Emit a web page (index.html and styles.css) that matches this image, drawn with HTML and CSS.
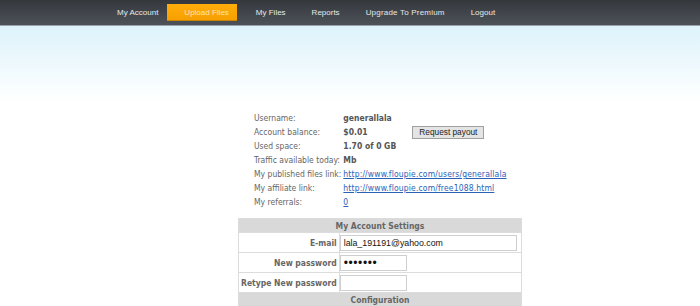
FILE: index.html
```html
<!DOCTYPE html>
<html lang="en">

<head>
    <meta charset="UTF-8">
    <meta name="viewport" content="width=device-width, initial-scale=1.0">
    <title>My Account</title>
    <link rel="stylesheet" href="styles.css">
</head>

<body>
    <nav class="nav">
        <ul class="nav__list">
            <li class="nav__item"><a href="#">My Account</a></li>
            <li class="nav__item nav__item_active"><a href="#">Upload Files</a></li>
            <li class="nav__item"><a href="#">My Files</a></li>
            <li class="nav__item"><a href="#">Reports</a></li>
            <li class="nav__item"><a href="#">Upgrade To Premium</a></li>
            <li class="nav__item"><a href="#">Logout</a></li>
        </ul>
    </nav>

    <div class="outer">
        <table class="info">
            <tr>
                <td class="info__label">Username:</td>
                <td class="info__value">generallala</td>
                <td></td>
            </tr>
            <tr>
                <td class="info__label">Account balance:</td>
                <td class="info__value">$0.01</td>
                <td><button class="btn">Request payout</button></td>
            </tr>
            <tr>
                <td class="info__label">Used space:</td>
                <td class="info__value">1.70 of 0 GB</td>
                <td></td>
            </tr>
            <tr>
                <td class="info__label">Traffic available today:</td>
                <td class="info__value">Mb</td>
                <td></td>
            </tr>
            <tr>
                <td class="info__label">My published files link:</td>
                <td colspan="2"><a class="info__link" href="#">http://www.floupie.com/users/generallala</a></td>
            </tr>
            <tr>
                <td class="info__label">My affiliate link:</td>
                <td colspan="2"><a class="info__link" href="#">http://www.floupie.com/free1088.html</a></td>
            </tr>
            <tr>
                <td class="info__label">My referrals:</td>
                <td colspan="2"><a class="info__link" href="#">0</a></td>
            </tr>
        </table>

        <table class="settings">
            <tr>
                <th colspan="2" class="settings__header">My Account Settings</th>
            </tr>
            <tr>
                <td class="settings__label">E-mail</td>
                <td class="settings__field"><input class="input input_wide" type="text" value="lala_191191@yahoo.com"></td>
            </tr>
            <tr>
                <td class="settings__label">New password</td>
                <td class="settings__field"><input class="input input_short input_pass" type="password" value="1234567"></td>
            </tr>
            <tr>
                <td class="settings__label">Retype New password</td>
                <td class="settings__field"><input class="input input_short input_pass" type="password" value=""></td>
            </tr>
            <tr>
                <th colspan="2" class="settings__header">Configuration</th>
            </tr>
        </table>
    </div>
</body>

</html>
```

FILE: styles.css
```css
* {
    box-sizing: border-box;
}

body {
    margin: 0;
    padding: 0;
    font-family: "DejaVu Sans Condensed", "DejaVu Sans", sans-serif;
    font-size: 8.5px;
    color: #666;
    background-color: #fff;
}

.nav {
    height: 26px;
    background: linear-gradient(#34383d, #4d5259);
    border-bottom: 1px solid #9aa2ab;
}

.nav__list {
    list-style: none;
    margin: 0;
    padding: 0 0 0 104px;
    display: flex;
    align-items: center;
    height: 25px;
}

.nav__item a {
    display: block;
    padding: 0 13px;
    height: 17px;
    line-height: 17px;
    font-family: "Liberation Sans", Arial, sans-serif;
    font-size: 8px;
    color: #e6e8ea;
    text-decoration: none;
}

.nav__item_active {
    margin: 0 6px 0 -4px;
}

.nav__item_active a {
    padding: 0 8px 0 17px;
    background: linear-gradient(#ffad0a, #f7a000);
    border-bottom: 1px solid #c98500;
    color: #fde4b4;
}

.nav__item:nth-child(5) a {
    letter-spacing: 0.2px;
}

.outer {
    padding: 85px 0 20px 238px;
    background: linear-gradient(#def3fb 0, #eaf7fc 30px, #f8fdfe 60px, #fff 78px);
}

.info {
    border-collapse: collapse;
    margin-left: 16px;
}

.info td {
    padding: 0 2px 0 0;
    height: 14px;
    line-height: 14px;
    white-space: nowrap;
    vertical-align: middle;
}

.info__label {
    width: 87px;
}

.info__value {
    width: 69px;
    font-weight: bold;
    color: #555;
}

.info__link {
    color: #2a62b8;
    letter-spacing: 0.15px;
}

.btn {
    display: block;
    height: 13px;
    width: 72px;
    margin-top: 1px;
    padding: 0;
    font-family: "Liberation Sans", Arial, sans-serif;
    font-size: 8.3px;
    line-height: 11px;
    color: #222;
    background: #e4e4e4;
    border: 1px solid #a0a0a0;
}

.settings {
    margin-top: 9px;
    width: 284px;
    border-collapse: collapse;
    border: 1px solid #cfcfcf;
    background: #fff;
}

.settings td,
.settings th {
    border: 1px solid #dcdcdc;
    padding: 0 2px;
}

.settings__header {
    height: 14px;
    background-color: #d9d9d9;
    font-weight: bold;
    color: #666;
    text-align: center;
}

.settings__label {
    width: 99px;
    height: 20px;
    text-align: right;
    font-weight: bold;
    color: #666;
    white-space: nowrap;
}

.settings td.settings__field {
    padding: 0;
}

.input {
    display: block;
    height: 16px;
    padding: 0 3px;
    font-family: "Liberation Sans", Arial, sans-serif;
    font-size: 8.8px;
    color: #111;
    background: #fff;
    border: 1px solid #cfcfcf;
}

.input_wide {
    width: 177px;
}

.input_short {
    width: 67px;
}

.input_pass {
    font-size: 12px;
    letter-spacing: 0.6px;
}
```
